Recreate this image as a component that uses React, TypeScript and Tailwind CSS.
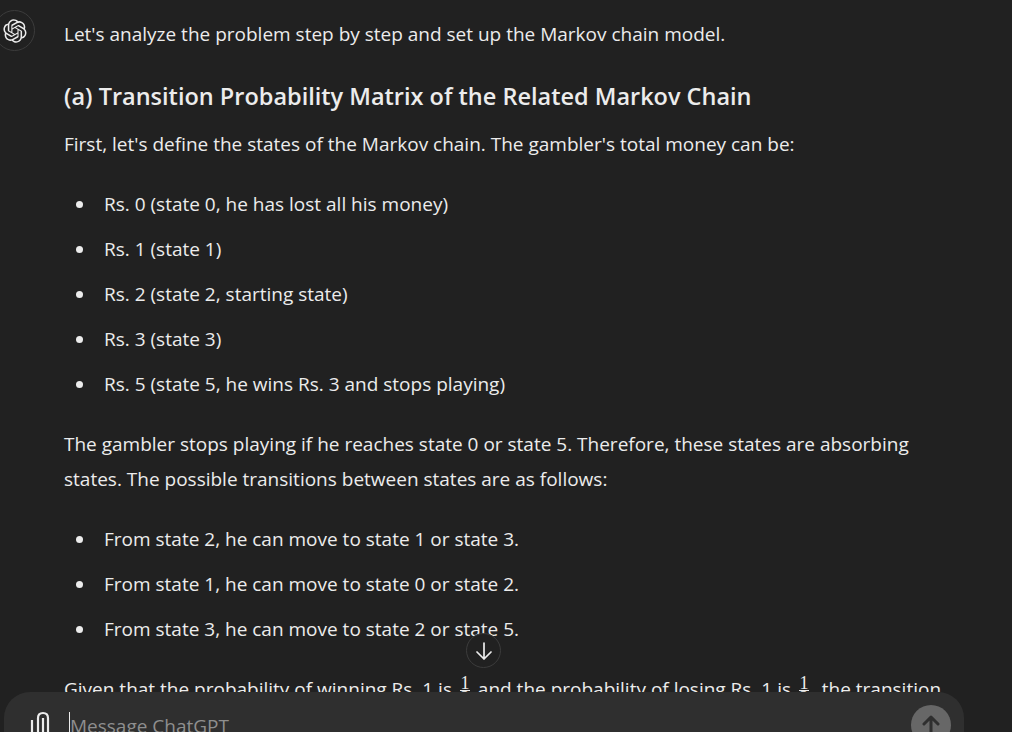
const LOGO =
	'M37.5324 16.8707C37.9808 15.5241 38.1363 14.0974 37.9886 12.6859C37.8409 11.2744 37.3934 9.91076 36.676 8.68622C35.6126 6.83404 33.9882 5.3676 32.0373 4.4985C30.0864 3.62941 27.9098 3.40259 25.8215 3.85078C24.8796 2.7893 23.7219 1.94125 22.4257 1.36341C21.1295 0.785575 19.7249 0.491269 18.3058 0.500197C16.1708 0.495044 14.0893 1.16803 12.3614 2.42214C10.6335 3.67624 9.34853 5.44666 8.6917 7.47815C7.30085 7.76286 5.98686 8.3414 4.8377 9.17505C3.68854 10.0087 2.73073 11.0782 2.02839 12.312C0.956464 14.1591 0.498905 16.2988 0.721698 18.4228C0.944492 20.5467 1.83612 22.5449 3.268 24.1293C2.81966 25.4759 2.66413 26.9026 2.81182 28.3141C2.95951 29.7256 3.40701 31.0892 4.12437 32.3138C5.18791 34.1659 6.8123 35.6322 8.76321 36.5013C10.7141 37.3704 12.8907 37.5973 14.9789 37.1492C15.9208 38.2107 17.0786 39.0587 18.3747 39.6366C19.6709 40.2144 21.0755 40.5087 22.4946 40.4998C24.6307 40.5054 26.7133 39.8321 28.4418 38.5772C30.1704 37.3223 31.4556 35.5506 32.1119 33.5179C33.5027 33.2332 34.8167 32.6547 35.9659 31.821C37.115 30.9874 38.0728 29.9178 38.7752 28.684C39.8458 26.8371 40.3023 24.6979 40.0789 22.5748C39.8556 20.4517 38.9639 18.4544 37.5324 16.8707ZM22.4978 37.8849C20.7443 37.8874 19.0459 37.2733 17.6994 36.1501C17.7601 36.117 17.8666 36.0586 17.936 36.0161L25.9004 31.4156C26.1003 31.3019 26.2663 31.137 26.3813 30.9378C26.4964 30.7386 26.5563 30.5124 26.5549 30.2825V19.0542L29.9213 20.998C29.9389 21.0068 29.9541 21.0198 29.9656 21.0359C29.977 21.052 29.9842 21.0707 29.9867 21.0902V30.3889C29.9842 32.375 29.1946 34.2791 27.7909 35.6841C26.3872 37.0892 24.4838 37.8806 22.4978 37.8849ZM6.39227 31.0064C5.51397 29.4888 5.19742 27.7107 5.49804 25.9832C5.55718 26.0187 5.66048 26.0818 5.73461 26.1244L13.699 30.7248C13.8975 30.8408 14.1233 30.902 14.3532 30.902C14.583 30.902 14.8088 30.8408 15.0073 30.7248L24.731 25.1103V28.9979C24.7321 29.0177 24.7283 29.0376 24.7199 29.0556C24.7115 29.0736 24.6988 29.0893 24.6829 29.1012L16.6317 33.7497C14.9096 34.7416 12.8643 35.0097 10.9447 34.4954C9.02506 33.9811 7.38785 32.7263 6.39227 31.0064ZM4.29707 13.6194C5.17156 12.0998 6.55279 10.9364 8.19885 10.3327C8.19885 10.4013 8.19491 10.5228 8.19491 10.6071V19.808C8.19351 20.0378 8.25334 20.2638 8.36823 20.4629C8.48312 20.6619 8.64893 20.8267 8.84863 20.9404L18.5723 26.5542L15.206 28.4979C15.1894 28.5089 15.1703 28.5155 15.1505 28.5173C15.1307 28.5191 15.1107 28.516 15.0924 28.5082L7.04046 23.8557C5.32135 22.8601 4.06716 21.2235 3.55289 19.3046C3.03862 17.3858 3.30624 15.3413 4.29707 13.6194ZM31.955 20.0556L22.2312 14.4411L25.5976 12.4981C25.6142 12.4872 25.6333 12.4805 25.6531 12.4787C25.6729 12.4769 25.6928 12.4801 25.7111 12.4879L33.7631 17.1364C34.9967 17.849 36.0017 18.8982 36.6606 20.1613C37.3194 21.4244 37.6047 22.849 37.4832 24.2684C37.3617 25.6878 36.8382 27.0432 35.9743 28.1759C35.1103 29.3086 33.9415 30.1717 32.6047 30.6641C32.6047 30.5947 32.6047 30.4733 32.6047 30.3889V21.188C32.6066 20.9586 32.5474 20.7328 32.4332 20.5338C32.319 20.3348 32.154 20.1698 31.955 20.0556ZM35.3055 15.0128C35.2464 14.9765 35.1431 14.9142 35.069 14.8717L27.1045 10.2712C26.906 10.1554 26.6803 10.0943 26.4504 10.0943C26.2206 10.0943 25.9948 10.1554 25.7963 10.2712L16.0726 15.8858V11.9982C16.0715 11.9783 16.0753 11.9585 16.0837 11.9405C16.0921 11.9225 16.1048 11.9068 16.1207 11.8949L24.1719 7.25025C25.4053 6.53903 26.8158 6.19376 28.2383 6.25482C29.6608 6.31589 31.0364 6.78077 32.2044 7.59508C33.3723 8.40939 34.2842 9.53945 34.8334 10.8531C35.3826 12.1667 35.5464 13.6095 35.3055 15.0128ZM14.2424 21.9419L10.8752 19.9981C10.8576 19.9893 10.8423 19.9763 10.8309 19.9602C10.8195 19.9441 10.8122 19.9254 10.8098 19.9058V10.6071C10.8107 9.18295 11.2173 7.78848 11.9819 6.58696C12.7466 5.38544 13.8377 4.42659 15.1275 3.82264C16.4173 3.21869 17.8524 2.99464 19.2649 3.1767C20.6775 3.35876 22.0089 3.93941 23.1034 4.85067C23.0427 4.88379 22.937 4.94215 22.8668 4.98473L14.9024 9.58517C14.7025 9.69878 14.5366 9.86356 14.4215 10.0626C14.3065 10.2616 14.2466 10.4877 14.2479 10.7175L14.2424 21.9419ZM16.071 17.9991L20.4018 15.4978L24.7325 17.9975V22.9985L20.4018 25.4983L16.071 22.9985V17.9991Z'

function Bullets({ items }: { items: string[] }) {
	return (
		<ul className="my-[25px] flex flex-col gap-[10px]">
			{items.map((item) => (
				<li key={item} className="relative pl-[40px]">
					<span className="absolute left-[12px] top-[14px] h-[7px] w-[7px] rounded-full bg-[#ececec]" />
					{item}
				</li>
			))}
		</ul>
	)
}

function OneOverTwo() {
	return (
		<span className="mx-[3px] inline-flex w-[10px] flex-col items-center align-[7px] font-['Liberation_Serif',serif] text-[18px] leading-[14px]">
			<span className="w-full border-b border-[#ececec] text-center">1</span>
			<span>2</span>
		</span>
	)
}

export default function App() {
	return (
		<div className="relative flex h-screen flex-col overflow-hidden bg-[#212121] font-['Open_Sans','Noto_Sans',sans-serif] text-[19px] leading-[35px] text-[#ececec]">
			<div className="flex min-h-0 flex-1 overflow-hidden pt-[17px]">
				<div className="-ml-[6px] mt-[-7px] flex h-[41px] w-[41px] shrink-0 items-center justify-center rounded-full border border-[#3c3c3c]">
					<svg viewBox="0 0 41 41" className="h-[24px] w-[24px]" fill="currentColor">
						<path d={LOGO} />
					</svg>
				</div>
				<div className="ml-[29px] w-[880px]">
					<p>Let's analyze the problem step by step and set up the Markov chain model.</p>
					<h3 className="mb-[13px] mt-[27px] text-[23.5px] font-semibold leading-[35px]">
						(a) Transition Probability Matrix of the Related Markov Chain
					</h3>
					<p>First, let's define the states of the Markov chain. The gambler's total money can be:</p>
					<Bullets
						items={[
							'Rs. 0 (state 0, he has lost all his money)',
							'Rs. 1 (state 1)',
							'Rs. 2 (state 2, starting state)',
							'Rs. 3 (state 3)',
							'Rs. 5 (state 5, he wins Rs. 3 and stops playing)',
						]}
					/>
					<p>
						The gambler stops playing if he reaches state 0 or state 5. Therefore, these states are absorbing states. The
						possible transitions between states are as follows:
					</p>
					<Bullets
						items={[
							'From state 2, he can move to state 1 or state 3.',
							'From state 1, he can move to state 0 or state 2.',
							'From state 3, he can move to state 2 or state 5.',
						]}
					/>
					<p className="whitespace-nowrap">
						Given that the probability of winning Rs. 1 is <OneOverTwo /> and the probability of losing Rs. 1 is{' '}
						<OneOverTwo />, the transition
					</p>
				</div>
			</div>

			<div className="ml-[4px] flex h-[40px] w-[960px] shrink-0 items-start overflow-hidden rounded-t-[26px] bg-[#2f2f2f]">
				<svg viewBox="0 0 20 24" className="ml-[26px] mt-[19px] h-[24px] w-[20px] shrink-0" fill="none" stroke="#ececec" strokeWidth="2.2">
					<path d="M2 9v15" />
					<path d="M8 24V7c0-3 2-5 5-5s5 2 5 5v17" />
					<path d="M13 7v17" />
				</svg>
				<div className="ml-[19px] mt-[20px] border-l border-[#ececec] leading-[28px] text-[#8e8e8e]">Message ChatGPT</div>
				<div className="ml-auto mr-[13px] mt-[13px] flex h-[40px] w-[40px] shrink-0 items-start justify-center rounded-full bg-[#676767]">
					<svg viewBox="0 0 18 24" className="mt-[10px] h-[24px] w-[18px]" fill="none" stroke="#2f2f2f" strokeWidth="3" strokeLinecap="round" strokeLinejoin="round">
						<path d="M2 9l7-7 7 7M9 2v22" />
					</svg>
				</div>
			</div>

			<div className="absolute left-[466px] top-[633px] flex h-[35px] w-[35px] items-center justify-center rounded-full border border-[#3c3c3c] bg-[#212121]">
				<svg viewBox="0 0 18 18" className="h-[18px] w-[18px]" fill="none" stroke="#ececec" strokeWidth="1.7" strokeLinecap="round" strokeLinejoin="round">
					<path d="M9 1v16M2 10l7 7 7-7" />
				</svg>
			</div>
		</div>
	)
}
